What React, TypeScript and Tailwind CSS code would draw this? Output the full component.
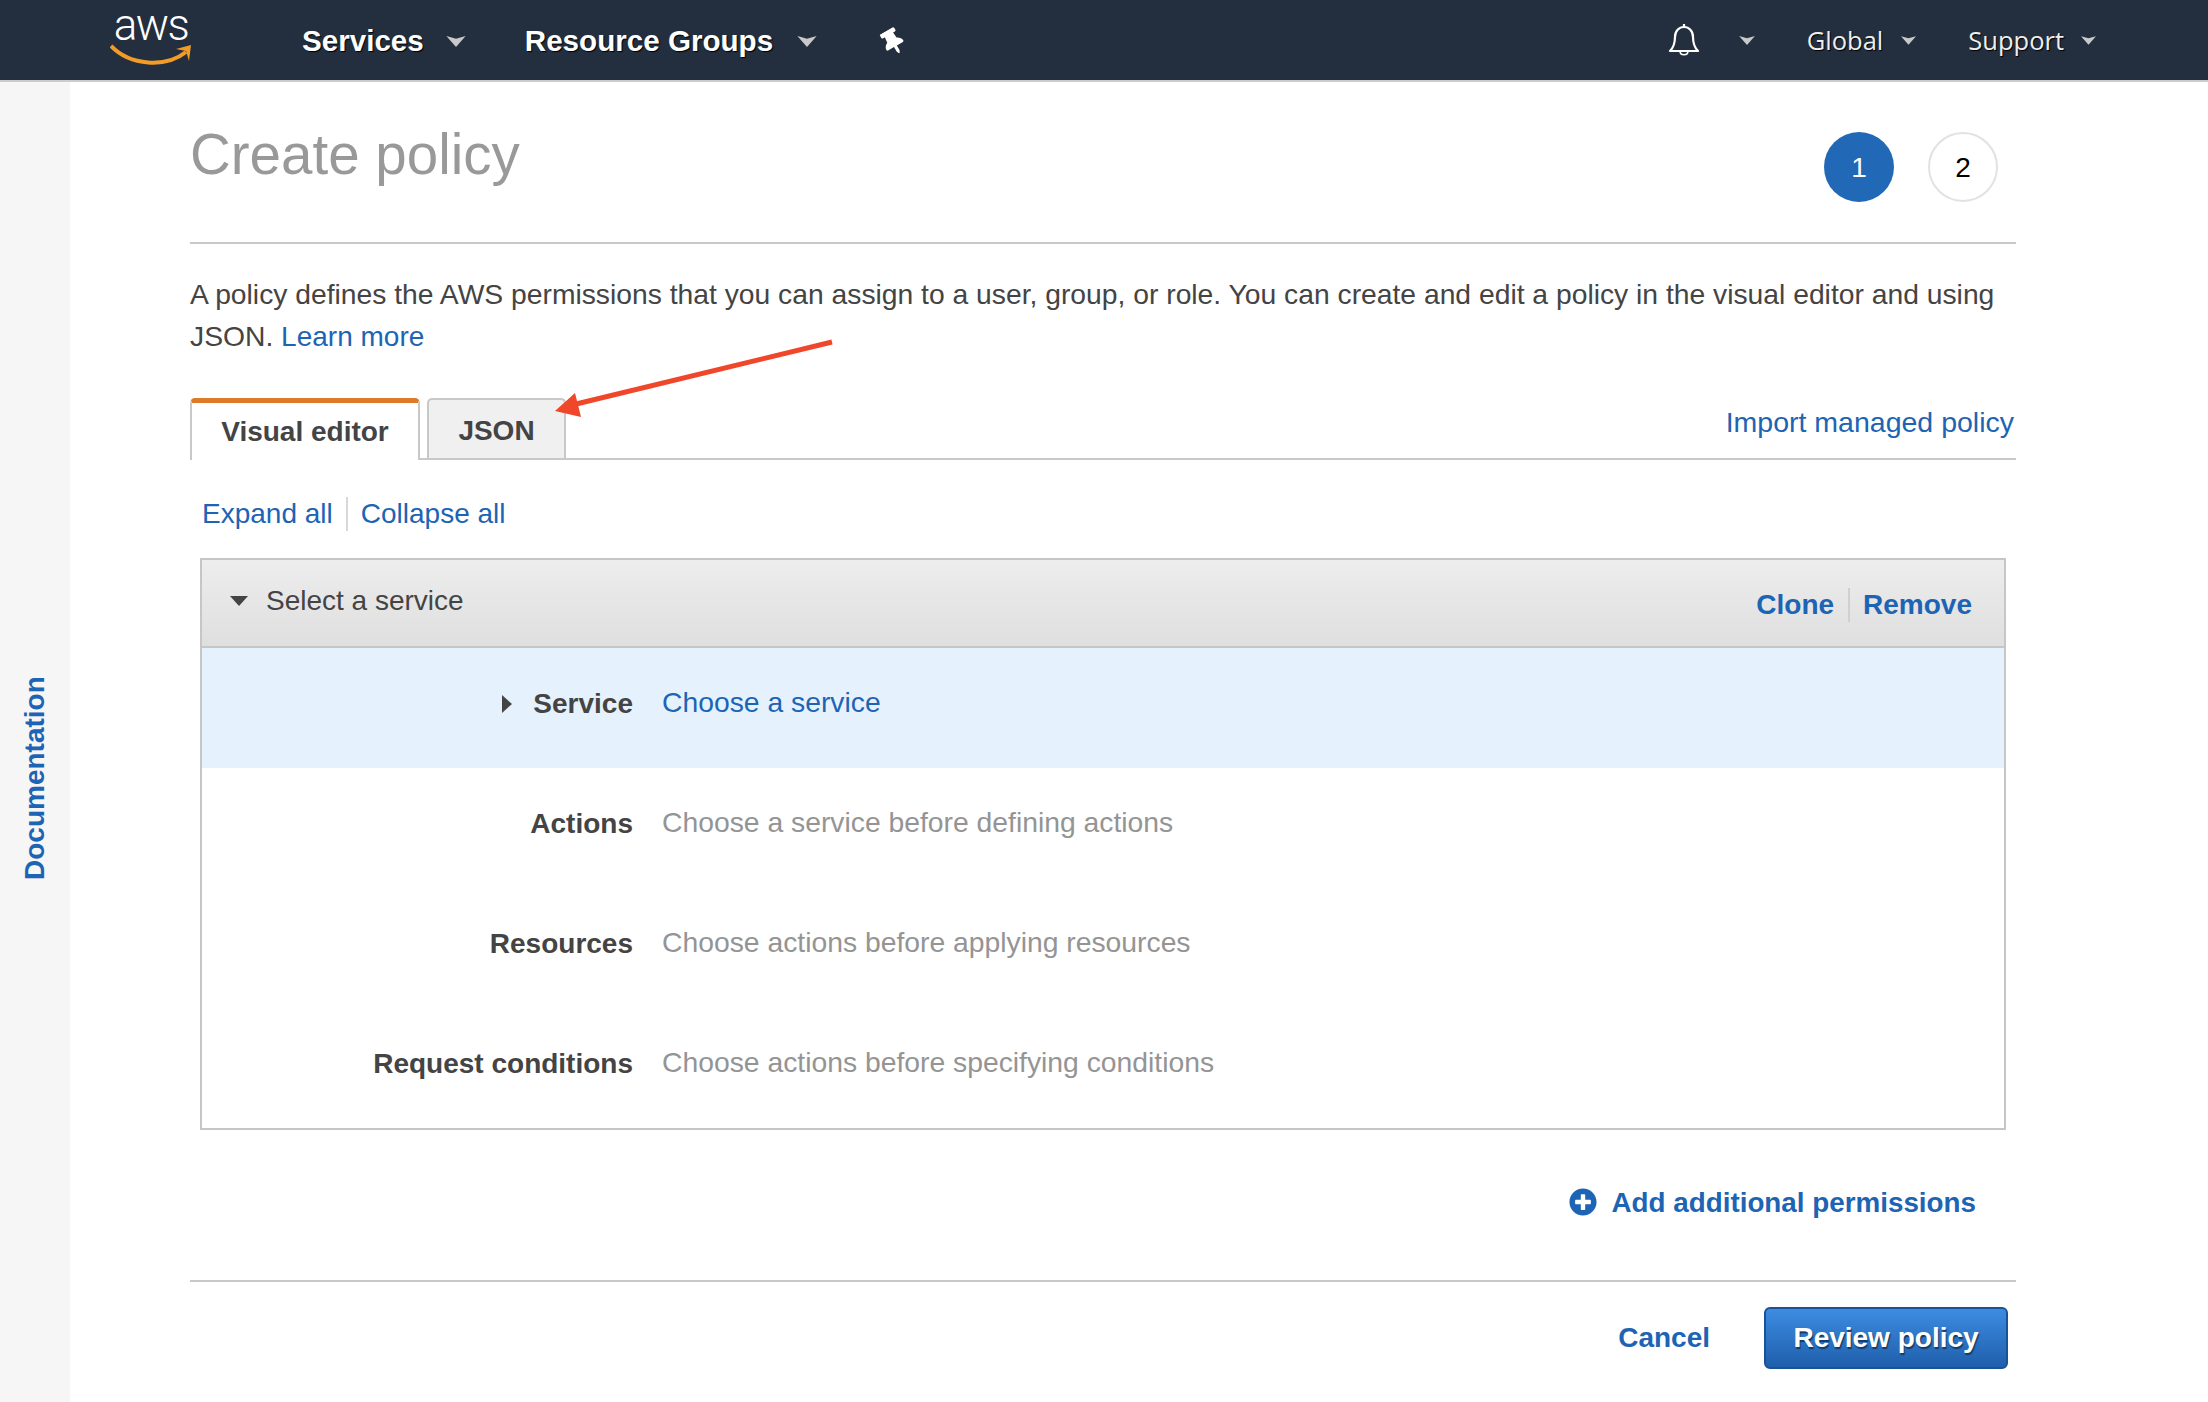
import { FaPlusCircle, FaThumbtack } from "react-icons/fa";

const rows = [
  { label: "Service", value: "Choose a service", active: true },
  { label: "Actions", value: "Choose a service before defining actions", active: false },
  { label: "Resources", value: "Choose actions before applying resources", active: false },
  { label: "Request conditions", value: "Choose actions before specifying conditions", active: false },
];

function NavCaret({ className }: { className: string }) {
  return (
    <svg viewBox="0 0 14 8" className={className} fill="#c9c9c9">
      <path d="M0 0 L7 2 L14 0 L7 8 Z" />
    </svg>
  );
}

function Logo() {
  return (
    <div className="flex flex-col items-center w-[82px] ml-[110px] -mt-[1px]">
      <span className="text-white text-[44px] leading-[38px] h-[38px] -mt-[8px] tracking-[-1.5px] font-['Roboto',sans-serif] font-light">aws</span>
      <svg viewBox="0 0 82 22" className="w-[82px] h-[22px]">
        <path d="M1 2 C20 22 56 24 76 8" fill="none" stroke="#f29b26" strokeWidth="4" />
        <path d="M66 5 L81 1 L79 17 L76 7 Z" fill="#f29b26" />
      </svg>
    </div>
  );
}

function Header() {
  return (
    <header className="h-[82px] shrink-0 bg-[#232f3e] border-b-2 border-[#cccccc] flex items-center text-white">
      <Logo />
      <span className="ml-[110px] mt-[2px] text-[29.6px] font-bold [text-shadow:1px_1px_1px_#000]">Services</span>
      <NavCaret className="ml-[22px] w-[20px] h-[11px] mt-[2px]" />
      <span className="ml-[59px] mt-[2px] text-[29.6px] font-bold [text-shadow:1px_1px_1px_#000]">Resource Groups</span>
      <NavCaret className="ml-[24px] w-[20px] h-[11px] mt-[2px]" />
      <FaThumbtack className="ml-[64px] mt-[3px] w-[24px] h-[26px] -rotate-[30deg]" />
      <div className="ml-auto flex items-center font-['Open_Sans',sans-serif] text-[25.5px] text-[#eeeeee] pr-[112px]">
        <svg viewBox="0 0 32 34" className="w-[32px] h-[34px]" fill="none" stroke="#ffffff" strokeWidth="2.2">
          <path d="M2 28 C6 24 7 20 7 14 C7 8 11 4 16 4 C21 4 25 8 25 14 C25 20 26 24 30 28 Z" strokeLinejoin="round" />
          <path d="M16 1 V4" />
          <path d="M12 28 C12 33 20 33 20 28" strokeWidth="1.6" />
        </svg>
        <NavCaret className="ml-[39px] w-[16px] h-[9px]" />
        <span className="ml-[52px] [text-shadow:1px_1px_1px_#000]">Global</span>
        <NavCaret className="ml-[18px] w-[15px] h-[9px]" />
        <span className="ml-[52px] [text-shadow:1px_1px_1px_#000]">Support</span>
        <NavCaret className="ml-[17px] w-[15px] h-[9px]" />
      </div>
    </header>
  );
}

function ServiceCard() {
  return (
    <div className="mx-[10px] mt-[27px] border-2 border-[#c6c6c6]">
      <div className="h-[88px] pb-[4px] bg-gradient-to-b from-[#ededed] to-[#dfdfdf] border-b-2 border-[#c6c6c6] flex items-center">
        <svg viewBox="0 0 18 10" className="ml-[28px] w-[18px] h-[10px]" fill="#444444">
          <path d="M0 0 H18 L9 10 Z" />
        </svg>
        <span className="ml-[18px] text-[28px] text-[#444444]">Select a service</span>
        <div className="ml-auto mr-[32px] mt-[8px] flex items-center font-bold text-[28px] text-[#1d64b4]">
          <span>Clone</span>
          <span className="w-[2px] h-[34px] bg-[#d0d0d0] ml-[14px] mr-[13px]" />
          <span>Remove</span>
        </div>
      </div>
      {rows.map((row) => (
        <div key={row.label} className={`h-[120px] pt-[36px] flex items-start ${row.active ? "bg-[#e5f2fe]" : "bg-white"}`}>
          <div className="w-[431px] flex items-center justify-end text-[28px] leading-[40px] font-bold text-[#444444]">
            {row.active && (
              <svg viewBox="0 0 10 18" className="mr-[21px] w-[10px] h-[18px]" fill="#444444">
                <path d="M0 0 L10 9 L0 18 Z" />
              </svg>
            )}
            {row.label}
          </div>
          <div className={`ml-[29px] text-[28.3px] leading-[36px] ${row.active ? "text-[#1d64b4]" : "text-[#949494]"}`}>
            {row.value}
          </div>
        </div>
      ))}
    </div>
  );
}

export default function App() {
  return (
    <div className="relative w-[2208px] h-[1402px] overflow-hidden bg-white flex flex-col font-['Liberation_Sans',Arial,sans-serif]">
      <Header />
      <div className="flex flex-1">
        <aside className="w-[70px] bg-[#f6f6f6] pt-[593px] flex justify-center">
          <span className="[writing-mode:vertical-rl] rotate-180 h-[206px] text-center font-bold text-[28px] leading-[30px] text-[#1d64b4]">
            Documentation
          </span>
        </aside>
        <main className="ml-[120px] w-[1826px]">
          <div className="h-[162px] border-b-2 border-[#c8c8c8] flex items-start justify-between pr-[18px]">
            <h1 className="mt-[41px] text-[56.5px] leading-[64px] text-[#999999]">Create policy</h1>
            <div className="mt-[50px] flex gap-[34px] text-[28px]">
              <div className="w-[70px] h-[70px] pt-[1px] rounded-full bg-[#2168b6] text-white flex items-center justify-center">1</div>
              <div className="w-[70px] h-[70px] pt-[1px] rounded-full border-2 border-[#e2e2e2] text-black flex items-center justify-center">2</div>
            </div>
          </div>

          <p className="mt-[29px] h-[84px] text-[28.27px] leading-[42px] text-[#444444]">
            A policy defines the AWS permissions that you can assign to a user, group, or role. You can create and edit a policy in the visual editor and using JSON. <span className="text-[28px] text-[#1d64b4]">Learn more</span>
          </p>

          <div className="mt-[41px] h-[62px] border-b-2 border-[#c8c8c8] flex items-start text-[28px] font-bold text-[#444444]">
            <div className="w-[230px] h-[62px] bg-white border-x-2 border-[#c8c8c8] border-t-[5px] border-t-[#dd7b29] rounded-t-[5px] flex items-center justify-center">
              Visual editor
            </div>
            <div className="ml-[7px] w-[139px] h-[60px] pt-[4px] bg-[#f0f0f0] border-x-2 border-t-2 border-[#c8c8c8] rounded-t-[5px] flex items-center justify-center">
              JSON
            </div>
            <span className="ml-auto mr-[2px] mt-[3px] font-normal text-[28.5px] text-[#1d64b4]">Import managed policy</span>
          </div>

          <div className="mt-[37px] ml-[12px] h-[34px] flex items-center text-[28px] text-[#1d64b4]">
            <span>Expand all</span>
            <span className="w-[2px] h-[34px] bg-[#d8d8d8] mx-[13px]" />
            <span>Collapse all</span>
          </div>

          <ServiceCard />

          <div className="mt-[52px] mr-[40px] flex items-center justify-end font-bold text-[27.8px] text-[#1d64b4]">
            <FaPlusCircle className="w-[28px] h-[28px] -mt-[2px]" />
            <span className="ml-[15px]">Add additional permissions</span>
          </div>

          <div className="mt-[56px] border-t-2 border-[#c8c8c8] pt-[25px] pr-[8px] flex items-center justify-end">
            <span className="font-bold text-[28px] text-[#1d64b4]">Cancel</span>
            <button className="ml-[54px] w-[244px] h-[62px] rounded-[6px] border-2 border-[#1a5296] bg-gradient-to-b from-[#3d8ce2] to-[#1f5fac] text-white font-bold text-[28px] [text-shadow:1px_2px_1px_#123a66]">
              Review policy
            </button>
          </div>
        </main>
      </div>

      <svg viewBox="0 0 2208 1402" className="absolute inset-0 w-[2208px] h-[1402px] pointer-events-none">
        <path d="M832 342 L572 405" stroke="#f0462a" strokeWidth="5" fill="none" />
        <path d="M555 411 L575 393 L581 417 Z" fill="#f0462a" />
      </svg>
    </div>
  );
}
